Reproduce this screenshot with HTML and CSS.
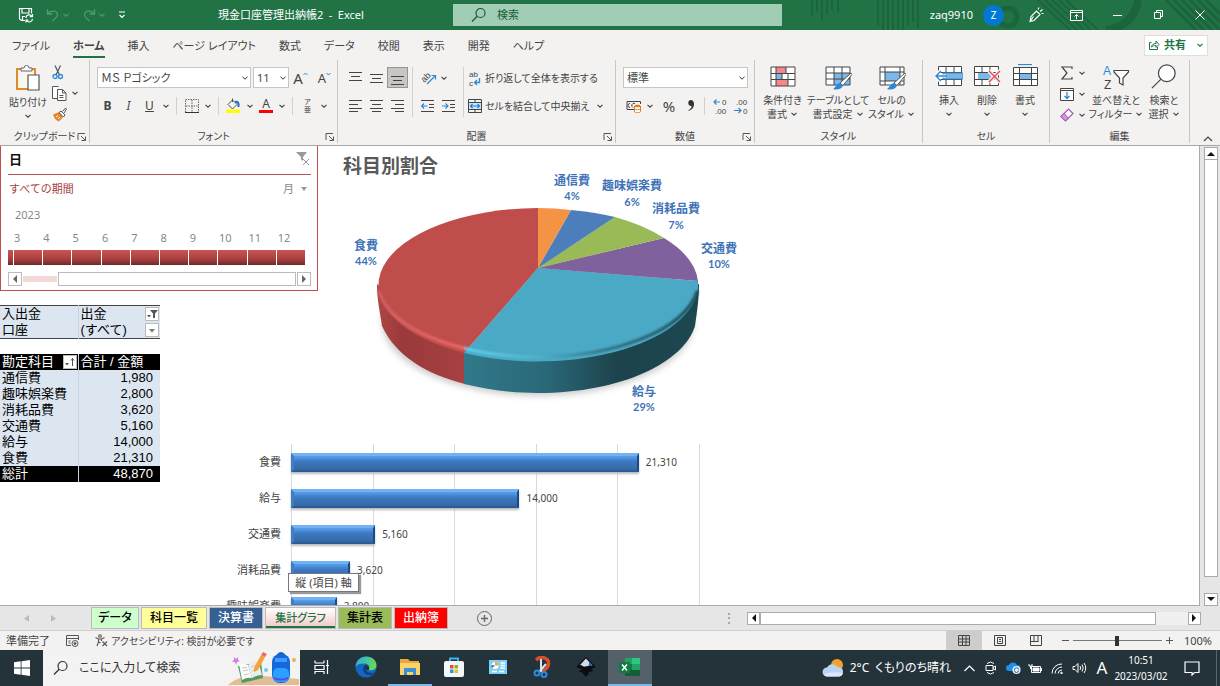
FILE: index.html
```html
<!DOCTYPE html>
<html lang="ja">
<head>
  <meta charset="UTF-8">
  <meta name="viewport" content="width=device-width, initial-scale=1.0">
  <title>現金口座管理出納帳2 - Excel</title>
  <link rel="stylesheet" href="styles.css">
</head>
<body>

<svg class="defs" aria-hidden="true">
  <symbol id="chev" viewBox="0 0 8 8"><path d="M1.5 2.8 4 5.2 6.5 2.8" fill="none" stroke="currentColor" stroke-width="1.1"/></symbol>
  <symbol id="launcher" viewBox="0 0 10 10"><path d="M1 8V1.5h7M4 4l4 4M8.500 4.500V8.500H4.500" fill="none" stroke="#555"/></symbol>
  <symbol id="glass" viewBox="0 0 16 16"><circle cx="9.500" cy="6" r="4.500" fill="none" stroke="currentColor" stroke-width="1.2"/><path d="M6.200 9.200 1 14.500" stroke="currentColor" stroke-width="1.300"/></symbol>
</svg>

<header class="titlebar">
  <svg class="titlebar-art" width="420" height="30" viewBox="0 0 420 30" fill="none" stroke="#1c653c">
    <path d="M12 0v16M17 0v12M22 0v20M27 0v14M32 0v10M38 0v12M78 0v26M83 0v30M88 0v30M93 0v30M98 0v30M103 0v30M108 0v26M113 0v22M118 0v28" stroke-width="2"/>
    <circle cx="208" cy="17" r="9" stroke-width="5"/>
    <path d="M238 0l32 30M245 0l32 30M252 0l32 30M259 0l32 30M266 0l32 30" stroke-width="2"/>
    <path d="M338 0q-4 26-32 30" stroke-width="8"/>
    <path d="M366 0l30 30M374 0l30 30M382 0l30 30M390 0l30 30M398 0l22 22M406 0l14 14" stroke-width="3"/>
  </svg>
  <div class="quick">
    <button aria-label="上書き保存"><svg width="16" height="16" viewBox="0 0 16 16" fill="none" stroke="#fff" stroke-width="1.200"><path d="M7 13.500H3.500L1.500 12V1.500h12v5M4 1.500v4.500h7V1.500M4.500 13.500V9.500H7"/><path d="M8 11a3.200 3.200 0 0 1 6-1.500M14.500 7v2.700h-2.700M14.500 12a3.200 3.200 0 0 1-6 1.300M8 15.500v-2.500h2.500"/></svg></button>
    <button class="dim" aria-label="元に戻す"><svg width="14" height="14" viewBox="0 0 14 14" fill="none" stroke="currentColor" stroke-width="1.300"><path d="M1.500 1v5h5M1.700 6C4 2 12 2 11.500 7c-.3 2.500-3 4-5 6"/></svg><svg class="chev"><use href="#chev"/></svg></button>
    <button class="dim" aria-label="やり直し"><svg width="14" height="14" viewBox="0 0 14 14" fill="none" stroke="currentColor" stroke-width="1.300"><path d="M12.500 1v5h-5M12.300 6C10 2 2 2 2.500 7c.3 2.500 3 4 5 6"/></svg><svg class="chev"><use href="#chev"/></svg></button>
    <button aria-label="カスタマイズ"><svg width="8" height="8" viewBox="0 0 8 8" fill="none" stroke="#fff" stroke-width="1.200"><path d="M1 1h6M1.500 4 4 6.500 6.500 4"/></svg></button>
  </div>
  <h1 class="doc-title">現金口座管理出納帳2&ensp;-&ensp;Excel</h1>
  <label class="find"><svg width="16" height="16"><use href="#glass"/></svg><input type="text" placeholder="検索" aria-label="検索"></label>
  <div class="account">
    <span>zaq9910</span><span class="avatar">Z</span>
  </div>
  <div class="window-buttons">
    <button aria-label="描画"><svg width="16" height="16" viewBox="0 0 16 16" fill="none" stroke="#fff" stroke-width="1.100"><path d="M2 14.500 3 9.500 8.500 4l3.500 3.500-6 6zM2 14.500l3.500-5M10 2.500 11 .5M12 4.500l2.500-2M13.500 6.500h2"/></svg></button>
    <button aria-label="リボンの表示オプション"><svg width="13" height="11" viewBox="0 0 13 11" fill="none" stroke="#fff"><path d="M.5.5h12v10H.5zM.5 2.500h12M6.500 9V4.500M4.500 6.500l2-2 2 2"/></svg></button>
    <button aria-label="最小化"><svg width="10" height="10" viewBox="0 0 10 10" stroke="#fff"><path d="M0 5.500h9"/></svg></button>
    <button aria-label="元のサイズ"><svg width="10" height="10" viewBox="0 0 10 10" fill="none" stroke="#fff"><path d="M.5 2.500h6v6h-6zM2.500 2.500V.5h6v6H6.500"/></svg></button>
    <button aria-label="閉じる"><svg width="10" height="10" viewBox="0 0 10 10" stroke="#fff"><path d="M.5.5l9 9M9.500.5l-9 9"/></svg></button>
  </div>
</header>

<nav class="menu">
  <a href="#">ファイル</a>
  <a href="#" class="active">ホーム</a>
  <a href="#">挿入</a>
  <a href="#">ページ レイアウト</a>
  <a href="#">数式</a>
  <a href="#">データ</a>
  <a href="#">校閲</a>
  <a href="#">表示</a>
  <a href="#">開発</a>
  <a href="#">ヘルプ</a>
  <button class="share"><svg width="12" height="12" viewBox="0 0 12 12" fill="none" stroke="currentColor"><path d="M3.500 3.500h-2v7h8V8M3.500 8C4 5.500 5.500 4.500 8 4.500V2l3 3.500L8 8.500V6.500C6 6.500 4.500 7 3.500 8z"/></svg>共有<svg class="chev"><use href="#chev"/></svg></button>
</nav>

<section class="ribbon">
  <div class="group">
    <div class="group-body clipboard">
      <button class="big"><svg width="26" height="28" viewBox="0 0 26 28" fill="none"><path d="M2 5h18v20H2z" stroke="#e08a2c" stroke-width="2" fill="#faf6f0"/><path d="M6 7V4h3a2.500 2.500 0 0 1 5 0h3v3z" fill="#fff" stroke="#666"/><path d="M13 11h11v15H13z" fill="#fff" stroke="#555" stroke-width="1.200"/></svg><span>貼り付け</span><svg class="chev"><use href="#chev"/></svg></button>
      <div class="stack">
        <button aria-label="切り取り"><svg width="12" height="15" viewBox="0 0 12 15" fill="none"><path d="M3 .5 7.500 10M8.500.5 4 10" stroke="#555" stroke-width="1.200"/><circle cx="3" cy="11.500" r="2" stroke="#2b88d8" stroke-width="1.300"/><circle cx="8.500" cy="11.500" r="2" stroke="#2b88d8" stroke-width="1.300"/></svg></button>
        <button aria-label="コピー"><svg width="15" height="15" viewBox="0 0 15 15" fill="#fff" stroke="#555"><path d="M5.500 12.500h-5V.5h6"/><path d="M5.500 3.500h5l3.500 3.500v7.500H5.500zM10.500 3.500V7H14M7.500 9.500h4M7.500 11.500h4"/></svg><svg class="chev"><use href="#chev"/></svg></button>
        <button aria-label="書式のコピー"><svg width="15" height="15" viewBox="0 0 15 15"><path d="M1 7.500 7.500 5l3.500 5-4 4.500c-3-1-5-3.500-6-7z" fill="#e8842a"/><path d="M7 5.500 9 4l4 4-1.500 2zM10.500 4.500 13.500 1l1 1L12 6" fill="#fff" stroke="#555"/><path d="M4 10l2-1.500M6 12l2-2" stroke="#fff"/></svg></button>
      </div>
    </div>
    <div class="group-name">クリップボード<svg class="launcher"><use href="#launcher"/></svg></div>
  </div>

  <div class="group">
    <div class="group-body rows">
      <div class="row">
        <select class="font-name" aria-label="フォント"><option>ＭＳ Ｐゴシック</option></select>
        <select class="font-size" aria-label="フォント サイズ"><option>11</option></select>
        <button class="letter" aria-label="拡大">A<svg width="6" height="12" viewBox="0 0 6 12" fill="none" stroke="#2b88d8"><path d="M.5 4 2.500 2l2 2"/></svg></button>
        <button class="letter small" aria-label="縮小">A<svg width="6" height="12" viewBox="0 0 6 12" fill="none" stroke="#2b88d8"><path d="M.5 2l2 2 2-2"/></svg></button>
      </div>
      <div class="row">
        <button class="tool"><b>B</b></button>
        <button class="tool"><i>I</i></button>
        <button class="tool"><u>U</u></button>
        <button class="drop" aria-label="下線"><svg class="chev"><use href="#chev"/></svg></button>
        <span class="sep"></span>
        <button class="tool" aria-label="罫線"><svg width="14" height="14" viewBox="0 0 14 14" fill="none" stroke="#666"><path d="M.5 13V.5h13V13M7 1v12M1 7h12" stroke-dasharray="1.500 1"/><path d="M0 13.500h14" stroke="#333"/></svg></button>
        <button class="drop" aria-label="罫線の種類"><svg class="chev"><use href="#chev"/></svg></button>
        <span class="sep"></span>
        <button class="tool" aria-label="塗りつぶし"><svg width="15" height="15" viewBox="0 0 15 15" fill="none"><path d="M2 6.500 6.500 2l4.500 4.500L6.500 11zM6.500 4V.5" stroke="#555"/><path d="M9 4c3-1 4 1 3.500 5" stroke="#1f6fc0" stroke-width="2"/><path d="M0 11.500h14v3.500H0z" fill="#ff0"/></svg></button>
        <button class="drop" aria-label="塗りつぶしの色"><svg class="chev"><use href="#chev"/></svg></button>
        <button class="tool font-color" aria-label="フォントの色">A</button>
        <button class="drop" aria-label="その他の色"><svg class="chev"><use href="#chev"/></svg></button>
        <span class="sep"></span>
        <button class="tool ruby">ア<br>亜</button>
        <button class="drop" aria-label="ふりがな"><svg class="chev"><use href="#chev"/></svg></button>
      </div>
    </div>
    <div class="group-name">フォント<svg class="launcher"><use href="#launcher"/></svg></div>
  </div>

  <div class="group">
    <div class="group-body align">
      <div class="align-grid">
        <button class="tool" aria-label="上揃え"><svg width="13" height="14"><path d="M0 1.500h13M2 5.500h9M0 9.500h13" stroke="#444"/></svg></button>
        <button class="tool" aria-label="上下中央揃え"><svg width="13" height="14"><path d="M0 3.500h13M2 7.500h9M0 11.500h13" stroke="#444"/></svg></button>
        <button class="tool pressed" aria-label="下揃え"><svg width="13" height="14"><path d="M0 5.500h13M2 9.500h9M0 13.500h13" stroke="#444"/></svg></button>
        <button class="tool" aria-label="左揃え"><svg width="13" height="12"><path d="M0 .5h13M0 4.500h9M0 8.500h13M0 11.500h9" stroke="#444"/></svg></button>
        <button class="tool" aria-label="中央揃え"><svg width="13" height="12"><path d="M0 .5h13M2 4.500h9M0 8.500h13M2 11.500h9" stroke="#444"/></svg></button>
        <button class="tool" aria-label="右揃え"><svg width="13" height="12"><path d="M0 .5h13M4 4.500h9M0 8.500h13M4 11.500h9" stroke="#444"/></svg></button>
      </div>
      <span class="sep tall"></span>
      <div class="rows indent">
        <div class="row">
          <button class="tool" aria-label="方向"><svg class="lettered" width="16" height="16" viewBox="0 0 16 16"><text x="1" y="11" font-size="9" transform="rotate(-45 5 8)">ab</text><path d="M7 14 15 6M11.500 5.500H15.500V9.500" fill="none" stroke="#2b88d8" stroke-width="1.200"/></svg></button>
          <button class="drop" aria-label="方向の種類"><svg class="chev"><use href="#chev"/></svg></button>
        </div>
        <div class="row">
          <button class="tool" aria-label="インデントを減らす"><svg width="13" height="12" fill="none"><path d="M0 .5h13M8 4.500h5M8 7.500h5M0 11.500h13" stroke="#444"/><path d="M6.500 6H.500M3 3.500.500 6 3 8.500" stroke="#2b88d8" stroke-width="1.200"/></svg></button>
          <button class="tool" aria-label="インデントを増やす"><svg width="13" height="12" fill="none"><path d="M0 .5h13M8 4.500h5M8 7.500h5M0 11.500h13" stroke="#444"/><path d="M0 6h6M3.500 3.500 6 6 3.500 8.500" stroke="#2b88d8" stroke-width="1.200"/></svg></button>
        </div>
      </div>
      <span class="sep tall"></span>
      <div class="rows wrap">
        <div class="row">
          <button class="wide"><svg class="lettered" width="14" height="18" viewBox="0 0 14 18"><text x="1" y="8" font-size="8">ab</text><text x="1" y="17" font-size="8">c</text><path d="M11.500 9v4.500H7M9 11l-2.500 2.500L9 16" fill="none" stroke="#2b88d8" stroke-width="1.300"/></svg>折り返して全体を表示する</button>
        </div>
        <div class="row">
          <button class="wide"><svg width="14" height="14" viewBox="0 0 14 14" fill="none"><path d="M.5.5h13v13H.5zM.5 3.500h13M.5 10.500h13M7 .5v3M7 10.500v3" stroke="#444"/><path d="M1 4h12v6H1z" fill="#cfe6f8"/><path d="M2.500 7h9M4.500 5 2.500 7l2 2M9.500 5l2 2-2 2" stroke="#1f7fd0" stroke-width="1.200"/></svg>セルを結合して中央揃え</button>
          <button class="drop" aria-label="結合の種類"><svg class="chev"><use href="#chev"/></svg></button>
        </div>
      </div>
    </div>
    <div class="group-name">配置<svg class="launcher"><use href="#launcher"/></svg></div>
  </div>

  <div class="group">
    <div class="group-body rows">
      <div class="row">
        <select class="number-format" aria-label="表示形式"><option>標準</option></select>
      </div>
      <div class="row">
        <button class="tool" aria-label="通貨"><svg width="16" height="14" viewBox="0 0 16 14" fill="none"><path d="M9 10.500H1v-8h13.500V5M4 4.500a2 2 0 0 0 0 4M9 4.500a2 2 0 0 0-2 4" stroke="#444"/><path d="M8.500 7v5.500c0 1.500 6 1.500 6 0V7" fill="#fff" stroke="#e07a1c"/><ellipse cx="11.500" cy="7" rx="3" ry="1.200" fill="#e07a1c"/><path d="M8.500 9.500c0 1.500 6 1.500 6 0" stroke="#e07a1c"/></svg></button>
        <button class="drop" aria-label="通貨の種類"><svg class="chev"><use href="#chev"/></svg></button>
        <button class="tool percent">%</button>
        <button class="tool comma" aria-label="桁区切り"><svg width="8" height="11" viewBox="0 0 8 11"><path d="M4 0a3 3 0 1 0 .6 6C4.500 8 3 9.500 1.500 10v.8C5 10 7.300 7 7 3.500 6.800 1.200 5.500 0 4 0z" fill="#333"/></svg></button>
        <span class="sep"></span>
        <button class="tool" aria-label="小数点以下を増やす"><svg class="lettered" width="16" height="18" viewBox="0 0 16 18"><path d="M8 5H2M4.500 2.500 2 5 4.500 7.500" fill="none" stroke="#2b88d8" stroke-width="1.200"/><text x="10" y="8" font-size="8">0</text><text x="3" y="17" font-size="8">.00</text></svg></button>
        <button class="tool" aria-label="小数点以下を減らす"><svg class="lettered" width="16" height="18" viewBox="0 0 16 18"><path d="M1 13.500h7M5.500 11 8 13.500 5.500 16" fill="none" stroke="#2b88d8" stroke-width="1.200"/><text x="3" y="8" font-size="8">.00</text><text x="10" y="17" font-size="8">0</text></svg></button>
      </div>
    </div>
    <div class="group-name">数値<svg class="launcher"><use href="#launcher"/></svg></div>
  </div>

  <div class="group">
    <div class="group-body styles">
      <button class="big"><svg width="28" height="26" viewBox="0 0 28 26"><path d="M2 3h24v19H2z" fill="#fff"/><path d="M7 3h10v6H7zM7 16h12v6H7z" fill="#f4868c"/><path d="M7 10h6v5H7z" fill="#7cb7ea"/><path d="M2 3h24v19H2zM2 9.500h24M2 15.500h24M7 3v19M13 9v7M17 3v6M19 9v13" fill="none" stroke="#444"/></svg><span>条件付き<br>書式<svg class="chev"><use href="#chev"/></svg></span></button>
      <button class="big"><svg width="28" height="26" viewBox="0 0 28 26"><path d="M2 3h24v18H2z" fill="#fff"/><path d="M10 9h16v12H10z" fill="#7cb7ea"/><path d="M2 3h24v18H2zM2 9h24M2 15h24M10 3v18M18 3v18" fill="none" stroke="#444"/><path d="M27 9 16 19l3 2.500L28 10.500z" fill="#fff" stroke="#555"/><path d="M16 19c-3 0-3 3-7 6 4 1.500 9 0 10-3.500z" fill="#2b88d8"/></svg><span>テーブルとして<br>書式設定<svg class="chev"><use href="#chev"/></svg></span></button>
      <button class="big"><svg width="28" height="26" viewBox="0 0 28 26"><path d="M2 3h24v18H2z" fill="#fff"/><path d="M7 8h15v9H7z" fill="#7cb7ea"/><path d="M2 3h24v18H2zM2 8h24M2 17h24M7 3v18M22 3v18" fill="none" stroke="#444"/><path d="M27 9 16 19l3 2.500L28 10.500z" fill="#fff" stroke="#555"/><path d="M16 19c-3 0-3 3-7 6 4 1.500 9 0 10-3.500z" fill="#2b88d8"/></svg><span>セルの<br>スタイル<svg class="chev"><use href="#chev"/></svg></span></button>
    </div>
    <div class="group-name">スタイル</div>
  </div>

  <div class="group">
    <div class="group-body cells">
      <button class="big"><svg width="28" height="26" viewBox="0 0 28 26"><path d="M3.500 2.500h23v19h-23z" fill="#fff" stroke="#444"/><path d="M3 8.500h24M3 15.500h24M11 2.500v19M19 2.500v19" stroke="#444"/><path d="M8 9h20v6H8z" fill="#7cb7ea" stroke="#3a8ad0"/><path d="M11 12H0M5 7l-5 5 5 5" fill="none" stroke="#fff" stroke-width="3"/><path d="M12 12H1M6 7l-5 5 5 5" fill="none" stroke="#2b88d8" stroke-width="1.400"/></svg><span>挿入</span><svg class="chev"><use href="#chev"/></svg></button>
      <button class="big"><svg width="28" height="26" viewBox="0 0 28 26"><path d="M1.500 2.500h24v19h-24z" fill="#fff" stroke="#444"/><path d="M1 8.500h25M1 15.500h25M9 2.500v19M17 2.500v19" stroke="#444"/><path d="M5 9h12v6H5z" fill="#7cb7ea"/><path d="M16 7l11 11M27 7 16 18" stroke="#f2f1f0" stroke-width="4"/><path d="M16 7l11 11M27 7 16 18" stroke="#e8484c" stroke-width="1.400"/></svg><span>削除</span><svg class="chev"><use href="#chev"/></svg></button>
      <button class="big"><svg width="28" height="26" viewBox="0 0 28 26"><path d="M2.500 3.500h24v18h-24z" fill="#fff" stroke="#444"/><path d="M9 9h12v7H9z" fill="#7cb7ea"/><path d="M2 9.500h25M2 15.500h25M8.500 3v18M20.500 3v18" stroke="#444"/><path d="M7 .500h14" stroke="#2b88d8" stroke-width="1.200"/></svg><span>書式</span><svg class="chev"><use href="#chev"/></svg></button>
    </div>
    <div class="group-name">セル</div>
  </div>

  <div class="group">
    <div class="group-body editing">
      <div class="stack">
        <button aria-label="合計"><svg width="14" height="14" viewBox="0 0 14 14"><path d="M12 3V1H2l5 6-5 6h10v-2" fill="none" stroke="#444" stroke-width="1.200"/></svg><svg class="chev"><use href="#chev"/></svg></button>
        <button aria-label="フィル"><svg width="14" height="13" viewBox="0 0 14 13"><path d="M.5.5h13v12H.5zM.5 2.500h13" fill="#fff" stroke="#444"/><path d="M7 4v6.500M4.500 8 7 10.500 9.500 8" fill="none" stroke="#2b88d8" stroke-width="1.300"/></svg><svg class="chev"><use href="#chev"/></svg></button>
        <button aria-label="クリア"><svg width="14" height="14" viewBox="0 0 14 14"><path d="M1 8.500 8.500 1 13 5.500 5.500 13z" fill="#fff" stroke="#a855b8" stroke-width="1.200"/><path d="M1 8.500 4 5.500 8.500 10 5.500 13z" fill="#cf9ad8" stroke="#a855b8"/></svg><svg class="chev"><use href="#chev"/></svg></button>
      </div>
      <button class="big"><svg class="lettered" width="28" height="26" viewBox="0 0 28 26"><text class="sort-a" x="1" y="11" font-size="12">A</text><text x="2" y="25" font-size="12">Z</text><path d="M12 6.500h14.500v1.500L21 14v7l-3.500-2v-5L12 8z" fill="#fff" stroke="#444" stroke-width="1.200"/></svg><span>並べ替えと<br>フィルター<svg class="chev"><use href="#chev"/></svg></span></button>
      <button class="big"><svg width="28" height="26" viewBox="0 0 28 28"><circle cx="17" cy="10" r="9" fill="#fff" stroke="#444" stroke-width="1.300"/><path d="M10.500 16.500 1 26" stroke="#444" stroke-width="1.300"/></svg><span>検索と<br>選択<svg class="chev"><use href="#chev"/></svg></span></button>
    </div>
    <div class="group-name">編集</div>
  </div>
  <button class="collapse" aria-label="リボンを折りたたむ"><svg width="10" height="7"><path d="M1 6l4-4 4 4" fill="none" stroke="#444" stroke-width="1.200"/></svg></button>
</section>

<main class="workspace">
  <div class="sheet">
    <table class="pivot filters">
      <tr><th scope="row">入出金</th><td>出金<button aria-label="入出金のフィルター"><svg width="12" height="12"><path d="M4 2h8L9 5.500V10H7V5.500z" fill="#555"/><path d="M1 7h4L3 9.500z" fill="#555"/></svg></button></td></tr>
      <tr><th scope="row">口座</th><td>(すべて)<button aria-label="口座のフィルター"><svg width="12" height="12"><path d="M3 5h6L6 8.500z" fill="#777"/></svg></button></td></tr>
    </table>
    <table class="pivot totals">
      <thead>
        <tr><th>勘定科目<button aria-label="並べ替え"><svg width="12" height="12"><path d="M1 7h4L3 9.500z" fill="#555"/><path d="M8.500 10V2.500M7 4.500 8.500 2.500 10 4.500" fill="none" stroke="#555"/></svg></button></th><th>合計 / 金額</th></tr>
      </thead>
      <tbody>
        <tr><th scope="row">通信費</th><td>1,980</td></tr>
        <tr><th scope="row">趣味娯楽費</th><td>2,800</td></tr>
        <tr><th scope="row">消耗品費</th><td>3,620</td></tr>
        <tr><th scope="row">交通費</th><td>5,160</td></tr>
        <tr><th scope="row">給与</th><td>14,000</td></tr>
        <tr><th scope="row">食費</th><td>21,310</td></tr>
      </tbody>
      <tfoot>
        <tr><th scope="row">総計</th><td>48,870</td></tr>
      </tfoot>
    </table>

    <!-- floating objects on the sheet -->
    <div class="timeline">
      <div class="timeline-head">日<button aria-label="フィルターのクリア"><svg width="14" height="14" viewBox="0 0 14 14"><path d="M0 0h11L7 5v4L5 7.500V5z" fill="#999"/><path d="M6 6l7 7M13 7l-6 6" stroke="#999" fill="none"/></svg></button></div>
      <div class="timeline-range"><span>すべての期間</span><button>月<svg width="6" height="4"><path d="M0 0h6L3 4z" fill="#999"/></svg></button></div>
      <div class="timeline-year">2023</div>
      <div class="months"><span>3</span><span>4</span><span>5</span><span>6</span><span>7</span><span>8</span><span>9</span><span>10</span><span>11</span><span>12</span></div>
      <div class="period"><i></i><i></i><i></i><i></i><i></i><i></i><i></i><i></i><i></i><i></i><i></i></div>
      <div class="timeline-scroll">
        <button aria-label="前へ"><svg width="6" height="8"><path d="M5 0v8L1 4z" fill="#666"/></svg></button>
        <span class="track"></span><span class="thumb"></span>
        <button aria-label="次へ"><svg width="6" height="8"><path d="M1 0v8l4-4z" fill="#666"/></svg></button>
      </div>
    </div>

    <svg class="pie" width="420" height="280" viewBox="330 146 420 280">
      <defs>
        <linearGradient id="redSide"><stop offset="0" stop-color="#b04545"/><stop offset=".3" stop-color="#9a3a3b"/><stop offset="1" stop-color="#a74041"/></linearGradient>
        <linearGradient id="tealSide"><stop offset="0" stop-color="#31798a"/><stop offset=".35" stop-color="#2a6878"/><stop offset=".65" stop-color="#1d434c"/><stop offset="1" stop-color="#1d4751"/></linearGradient>
        <linearGradient id="rim" gradientUnits="userSpaceOnUse" x1="378" y1="0" x2="698" y2="0"><stop offset="0" stop-color="#d06060"/><stop offset=".270" stop-color="#f06a6a"/><stop offset=".272" stop-color="#62d4f0"/><stop offset=".5" stop-color="#4fb2cb"/><stop offset=".7" stop-color="#317485"/><stop offset="1" stop-color="#1d4751"/></linearGradient>
        <filter id="soft" x="-10%" y="-20%" width="120%" height="140%"><feGaussianBlur stdDeviation="1"/></filter>
        <filter id="shade" x="-10%" y="-20%" width="120%" height="140%"><feGaussianBlur stdDeviation="3"/></filter>
      </defs>
      <ellipse cx="538" cy="322" rx="156" ry="74" fill="#ccc" filter="url(#shade)"/>
      <path d="M377 284C377 300 380 312 382 326C396 356 426 374 465 384V350z" fill="url(#redSide)"/>
      <path d="M464 350V384C490 390 512 393 538 393C622 393 684 362 695 326C697 312 699 300 699 284z" fill="url(#tealSide)"/>
      <path d="M538 268V208A161 77 0 0 0 464 353z" fill="#bf4d4b"/>
      <path d="M538 268 464 353A161 77 0 0 0 698 281z" fill="#4aa9c5"/>
      <path d="M538 268 698 281A161 77 0 0 0 664 238z" fill="#7f619e"/>
      <path d="M538 268 664 238A161 77 0 0 0 615 217z" fill="#9ab957"/>
      <path d="M538 268 615 217A161 77 0 0 0 571 210z" fill="#4b7ebb"/>
      <path d="M538 268 571 210A161 77 0 0 0 538 208z" fill="#f59344"/>
      <path d="M379 292A161 77 0 0 0 697 292" fill="none" stroke="url(#rim)" stroke-width="3" stroke-linecap="round" filter="url(#soft)"/>
      <g class="pie-text">
        <text class="pie-title" x="343" y="173">科目別割合</text>
        <text x="572" y="185">通信費</text><text class="pct" x="572" y="200">4%</text>
        <text x="632" y="190">趣味娯楽費</text><text class="pct" x="632" y="206">6%</text>
        <text x="676" y="213">消耗品費</text><text class="pct" x="676" y="229">7%</text>
        <text x="719" y="253">交通費</text><text class="pct" x="719" y="268">10%</text>
        <text x="366" y="250">食費</text><text class="pct" x="366" y="265">44%</text>
        <text x="644" y="396">給与</text><text class="pct" x="644" y="411">29%</text>
      </g>
    </svg>

    <div class="bar-chart">
      <div class="bar-names"><span>食費</span><span>給与</span><span>交通費</span><span>消耗品費</span><span>趣味娯楽費</span></div>
      <div class="bar-plot">
        <div class="bar-row"><i class="bar" style="width:85.24%"></i>21,310</div>
        <div class="bar-row"><i class="bar" style="width:56%"></i>14,000</div>
        <div class="bar-row"><i class="bar" style="width:20.64%"></i>5,160</div>
        <div class="bar-row"><i class="bar" style="width:14.48%"></i>3,620</div>
        <div class="bar-row"><i class="bar" style="width:11.2%"></i>2,800</div>
      </div>
      <div class="tooltip" role="tooltip">縦 (項目) 軸</div>
    </div>
  </div>
  <div class="vscroll">
    <button aria-label="上へ"><svg width="8" height="5"><path d="M0 5h8L4 1z" fill="#111"/></svg></button>
    <span class="thumb"></span>
    <button aria-label="下へ"><svg width="8" height="5"><path d="M0 0h8L4 4z" fill="#111"/></svg></button>
  </div>
</main>

<nav class="sheet-tabs">
  <div class="tab-arrows"><svg width="5" height="7"><path d="M5 0v7L0 3.500z" fill="#bbb"/></svg><svg width="5" height="7"><path d="M0 0v7l5-3.500z" fill="#bbb"/></svg></div>
  <a href="#" class="tab green">データ</a>
  <a href="#" class="tab yellow">科目一覧</a>
  <a href="#" class="tab blue">決算書</a>
  <a href="#" class="tab current">集計グラフ</a>
  <a href="#" class="tab olive">集計表</a>
  <a href="#" class="tab red">出納簿</a>
  <button class="add" aria-label="新しいシート"><svg width="15" height="15" fill="none" stroke="#666"><circle cx="7.500" cy="7.500" r="7"/><path d="M7.500 4v7M4 7.500h7" stroke-width="1.400"/></svg></button>
  <span class="dots">⋮</span>
  <div class="hscroll">
    <button aria-label="左へ"><svg width="5" height="8"><path d="M5 0v8L1 4z" fill="#111"/></svg></button>
    <span class="thumb"></span>
    <button aria-label="右へ"><svg width="5" height="8"><path d="M0 0v8l4-4z" fill="#111"/></svg></button>
  </div>
</nav>

<footer class="status">
  <span>準備完了</span>
  <svg width="13" height="12" viewBox="0 0 13 12" fill="none" stroke="#555"><path d="M5 10.500H.5V.5h12V5M.5 3.500h12M2.500 6h2M2.500 8h2"/><circle cx="9" cy="8.500" r="3"/><circle cx="9" cy="8.500" r="1" fill="#555"/></svg>
  <span class="access"><svg width="13" height="13" viewBox="0 0 13 13" fill="none" stroke="#555" stroke-width="1.100"><circle cx="5" cy="2" r="1.300"/><path d="M.5 3.500 3.500 5v3L2 12M9.500 3.500 6.500 5v2M3.500 5h3M4 8l1.500 1M7.500 7.500l4.500 4.500M12 7.500 7.500 12"/></svg>アクセシビリティ: 検討が必要です</span>
  <div class="views">
    <button class="on" aria-label="標準"><svg width="12" height="11" fill="none" stroke="#444"><path d="M.5.5h11v10H.5zM.5 4h11M.5 7h11M4.500.5v10M8 .5v10"/></svg></button>
    <button aria-label="ページ レイアウト"><svg width="12" height="11" fill="none" stroke="#444"><path d="M.5.5h11v10H.5zM3.500 2.500h5v6h-5zM5 4.500h2M5 6.500h2"/></svg></button>
    <button aria-label="改ページ プレビュー"><svg width="12" height="11" fill="none" stroke="#444"><path d="M.5.5h11v10H.5zM4 .5v6M8 .5v6M.5 6.500h8"/></svg></button>
  </div>
  <button class="step" aria-label="縮小"><svg width="7" height="7"><path d="M0 3.500h7" stroke="#555"/></svg></button>
  <input type="range" class="zoom" min="0" max="200" value="100" aria-label="ズーム">
  <button class="step" aria-label="拡大"><svg width="7" height="7"><path d="M0 3.500h7M3.500 0v7" stroke="#555"/></svg></button>
  <span class="zoom-value">100%</span>
</footer>

<footer class="taskbar">
  <button class="start" aria-label="スタート"><svg width="16" height="16" fill="#fff"><path d="M0 2.300 6.700 1.300v6.300H0zM7.500 1.200 16 0v7.600H7.500zM0 8.400h6.700v6.300L0 13.700zM7.500 8.400H16V16l-8.500-1.200z"/></svg></button>
  <label class="task-search">
    <svg width="16" height="16"><use href="#glass"/></svg>
    <input type="text" placeholder="ここに入力して検索" aria-label="ここに入力して検索">
    <svg width="72" height="34" viewBox="0 0 72 34">
      <path d="M0 34C12 24 22 25 34 25L71 28V34z" fill="#e2bd94"/>
      <path d="M6 6l2 2 2-2 0 3 2 1-3 1-1 3-1-3-3 0 2-2z" fill="#d67bea"/>
      <path d="M10 15 14 32 35 27 33 11z" fill="#4f9a68"/><path d="M11 13q5-1 9 1l4 13q-5-1-10 2z" fill="#fafafa"/><path d="M20 14q4-4 10-5l4 15q-6 0-10 3z" fill="#ececec"/><path d="M14 17l5-.5M15 20l5-1M23 16l6-2M24 20l6-2M16 24l5-1" stroke="#c9c9c9"/>
      <path d="M33 4l4 2-7 13-4 2 0-4z" fill="#f3a33b"/><path d="M33 4l2-3 4 2-2 3z" fill="#ec6d5e"/>
      <circle cx="38" cy="19" r="2" fill="#6ccdf0"/><circle cx="66" cy="9" r="2" fill="#f4b23c"/>
      <path d="M49 5q4-6 8 0" fill="none" stroke="#1460c0" stroke-width="2"/><rect x="44" y="3" width="18" height="29" rx="8" fill="#1667dc"/><path d="M47 7h12v4H47z" fill="#3f9bff"/><rect x="45" y="17" width="16" height="14" rx="5" fill="#2ba0ff"/><path d="M46 26q7 3 14 0v2q-7 3-14 0z" fill="#5a48e0"/>
    </svg>
  </label>
  <button class="app" aria-label="タスク ビュー"><svg width="16" height="14" fill="none" stroke="#fff" stroke-width="1.200"><path d="M1 3V.5M10 3V.5M1 3h9M1 5.500h9v4H1zM1 14v-2.500h9V14M13.500 0v14M12 5.500h3"/></svg></button>
  <button class="app" aria-label="Edge"><svg width="22" height="22" viewBox="0 0 22 22"><defs><linearGradient id="edge" x2="1" y2=".4"><stop offset="0" stop-color="#2aa9ea"/><stop offset="1" stop-color="#63d957"/></linearGradient></defs><circle cx="11" cy="11" r="10.500" fill="#1467c0"/><path d="M.5 11C1 4 6 .5 11 .5c7 0 11 5 10.500 9.500-.5 4-5 5-8 4 1.500-2 1-6-3-6.500C6 7 2 8 .5 11z" fill="url(#edge)"/><path d="M8 13c0 4 4 6.500 8 6 2-.5 3-1.500 3.500-2.500-4 1.500-8 0-8.500-2.500 0-2 0-3.500.500-5C9 9 8 11 8 13z" fill="#0d3f8a"/><path d="M11 9.500c-1.500 1-1 4 1.500 4.500h1c1.500-2 0-5-2.500-4.500z" fill="#263238"/></svg></button>
  <button class="app open" aria-label="エクスプローラー"><svg width="20" height="18"><path d="M0 1h8l2 2h9v14H0z" fill="#e9a93a"/><path d="M0 5h20v12H0z" fill="#fbd268"/><path d="M4 10h12v7h-3v-3H7v3H4z" fill="#3f8fd6"/></svg></button>
  <button class="app" aria-label="Store"><svg width="20" height="20"><path d="M6 5V1.500h8V5" fill="none" stroke="#38b2ee" stroke-width="2"/><rect y="4" width="20" height="16" rx="2" fill="#f5f8fb"/><path d="M6 8h3.500v3.500H6z" fill="#ef4c2c"/><path d="M10.500 8H14v3.500h-3.500z" fill="#7db82c"/><path d="M6 12.500h3.500V16H6z" fill="#1f9be0"/><path d="M10.500 12.500H14V16h-3.500z" fill="#f8b81e"/></svg></button>
  <button class="app" aria-label="コントロール パネル"><svg width="18" height="14"><path d="M0 0h18v14H0z" fill="#7fd0f6"/><circle cx="6" cy="5.500" r="3.500" fill="#fff"/><path d="M6 5.500V2a3.500 3.500 0 0 1 3.500 3.500z" fill="#f5a623"/><path d="M6 5.500 3 8a3.500 3.500 0 0 1-.5-3z" fill="#1f6fc0"/><path d="M11.500 3H16M11.500 5.500H16M11.500 8H16M3 11.500h5M10 11.500h5" stroke="#fff" stroke-width="1.300"/></svg></button>
  <button class="app" aria-label="切り取りツール"><svg width="18" height="22" fill="none"><path d="M3 4C8-1 16 2 15.500 8c-.5 5-4 6-7 7" stroke="#d94f2a" stroke-width="3.500"/><path d="M8 3v13M13 8l-7 8" stroke="#dfe4e8" stroke-width="2"/><circle cx="4" cy="17" r="2.500" stroke="#2a8be0" stroke-width="2"/><circle cx="11" cy="18.500" r="2.500" stroke="#2a8be0" stroke-width="2"/></svg></button>
  <button class="app" aria-label="Inkscape"><svg width="20" height="20"><path d="M10 0 19 9c1 2-3 2-4 3l2 2-4 1-1 3-2 1.500L8 18l-1-2-4-1.500L6 12C3 11 0 11 1 9z" fill="#0b0d10"/><path d="M10 1.500 16 8c-2 1-3-.5-4 1-1 1-2-.5-3 .5S6 8 4 8z" fill="#cfdbe8"/><path d="M13 4.500 17 9l-4 0z" fill="#2f62a8"/></svg></button>
  <button class="app open excel" aria-label="Excel"><svg width="22" height="20"><path d="M6 1h15v18H6z" fill="#21a366"/><path d="M13 1h8v6h-8z" fill="#33c481"/><path d="M6 7h7v6H6z" fill="#107c41"/><path d="M6 13h15v6H6z" fill="#185c37"/><rect y="5" width="11" height="11" rx="1" fill="#107c41"/><path d="M3 7.500 8 13.500M8 7.500 3 13.500" stroke="#fff" stroke-width="1.600"/></svg></button>
  <div class="tray">
    <button class="weather"><svg width="22" height="18"><circle cx="15" cy="6" r="6" fill="#f5a02c"/><path d="M5 17.500a4.500 4.500 0 0 1 0-9A6 6 0 0 1 15.500 8a4.800 4.800 0 0 1 1.500 9.500z" fill="#b9d2f5"/><path d="M2 15q9-3 19-1-1 3.500-4 3.500H5q-2.500-.5-3-2.500z" fill="#dbe7fb"/></svg>2°C&ensp;くもりのち晴れ</button>
    <button aria-label="隠れているアイコン"><svg width="11" height="7" fill="none" stroke="#fff" stroke-width="1.200"><path d="M.5 6 5.500 1l5 5"/></svg></button>
    <button aria-label="会議"><svg width="12" height="14" fill="none" stroke="#fff"><path d="M1 4.500h7v5H1zM8 6.500l2.500-1.500v4L8 7.500M2 2.500q3.500-3 7 0M2 11.500q3.500 3 7 0"/></svg></button>
    <button aria-label="OneDrive"><svg width="15" height="12"><path d="M3 9a3 3 0 0 1 0-6A4.500 4.500 0 0 1 11 3a3 3 0 0 1 1 6z" fill="#1f8fe8"/><circle cx="10.500" cy="8" r="4" fill="#e8f2fb"/><path d="M8.500 8a2 2 0 0 1 4-.5M12.500 8.500a2 2 0 0 1-4 0" fill="none" stroke="#1566b0"/></svg></button>
    <button aria-label="バッテリー"><svg width="14" height="11" fill="none" stroke="#fff"><path d="M3.500 3.500h9v6h-9zM13.500 5v3M1 1v2h3V1M2.500 3v3"/><path d="M5 5h6v3H5z" fill="#fff"/></svg></button>
    <button aria-label="Wi-Fi"><svg width="12" height="11" fill="none" stroke="#fff"><path d="M1 10.500A9.500 9.500 0 0 1 11 1M4 10.500A7 7 0 0 1 11 4M7 10.500A4 4 0 0 1 11 7"/><circle cx="10.500" cy="10" r=".8" fill="#fff"/></svg></button>
    <button aria-label="音量"><svg width="15" height="12" fill="none" stroke="#fff"><path d="M1 4.500h2L6 1.500v9L3 7.500H1zM8 4q1.500 2 0 4M10 2.500q2.500 3.500 0 7M12 1q3.500 5 0 10"/></svg></button>
    <button class="ime">A</button>
    <div class="clock">10:51<br>2023/03/02</div>
    <button class="notice" aria-label="通知"><svg width="16" height="15" fill="none" stroke="#fff" stroke-width="1.200"><path d="M1 1h14v10.500h-4.500L8 14v-2.500H1z"/></svg></button>
  </div>
</footer>

</body>
</html>
```
FILE: styles.css
```css
* {
  box-sizing: border-box;
}
body {
  margin: 0;
  height: 100vh;
  display: flex;
  flex-direction: column;
  overflow: hidden;
  font-family: "Noto Sans", "Noto Sans CJK JP", sans-serif;
  font-feature-settings: "palt";
  font-size: 11px;
  line-height: 14px;
  color: #444;
  background: #f3f2f1;
}
button, input, select {
  font: inherit;
  font-feature-settings: inherit;
  color: inherit;
  border: 0;
  padding: 0;
  margin: 0;
  background: none;
}
button {
  display: flex;
  align-items: center;
  justify-content: center;
  white-space: nowrap;
}
a {
  color: inherit;
  text-decoration: none;
}
svg {
  flex: none;
}
.defs {
  position: absolute;
  width: 0;
  height: 0;
}
.chev {
  width: 8px;
  height: 8px;
}
.lettered {
  overflow: visible;
  font-family: "Liberation Sans", sans-serif;
  fill: #444;
}
.sort-a {
  fill: #2b88d8;
}

/* title bar */
.titlebar {
  position: relative;
  display: flex;
  align-items: center;
  height: 30px;
  flex: none;
  background: #217346;
  color: #fff;
}
.titlebar-art {
  position: absolute;
  right: 0;
  top: 0;
}
.quick {
  display: flex;
  align-items: center;
  gap: 12px;
  width: 218px;
  padding-left: 18px;
}
.quick button {
  gap: 2px;
}
.quick .dim {
  color: #4f9a6e;
}
.doc-title {
  width: 235px;
  margin: 0;
  font-size: 11px;
  font-weight: normal;
}
.find {
  display: flex;
  align-items: center;
  gap: 10px;
  width: 329px;
  height: 22px;
  padding-left: 18px;
  background: #a0cdb3;
  color: #185c37;
}
.find input {
  flex: 1;
  min-width: 0;
}
input::placeholder {
  color: inherit;
  opacity: 1;
}
.account {
  position: relative;
  display: flex;
  align-items: center;
  gap: 10px;
  margin-left: auto;
}
.avatar {
  width: 21px;
  height: 21px;
  border-radius: 50%;
  background: #0078d4;
  font-size: 10px;
  line-height: 21px;
  text-align: center;
}
.window-buttons {
  position: relative;
  display: flex;
  padding-left: 11px;
}
.window-buttons button {
  width: 41px;
  height: 30px;
}

/* ribbon tabs */
.menu {
  display: flex;
  align-items: center;
  gap: 23px;
  height: 30px;
  flex: none;
  padding: 0 12px;
}
.menu a {
  padding: 7px 0 3px;
  border-bottom: 2px solid transparent;
}
.menu .active {
  border-color: #217346;
  font-weight: bold;
}
.share {
  gap: 4px;
  width: 64px;
  height: 21px;
  margin-left: auto;
  background: #fff;
  border: 1px solid #e1dfdd;
  color: #217346;
  font-weight: bold;
}
.share .chev {
  margin-left: 6px;
}

/* ribbon */
.ribbon {
  display: grid;
  grid-template-columns: 90px 248px 278px 139px 168px 127px 140px 1fr;
  height: 86px;
  flex: none;
  border-bottom: 1px solid #a6a6a6;
}
.group {
  display: flex;
  flex-direction: column;
  height: 83px;
  border-right: 1px solid #c8c6c4;
}
.group-body {
  display: flex;
  flex: 1;
}
.group-name {
  position: relative;
  height: 14px;
  font-size: 10px;
  text-align: center;
}
.launcher {
  position: absolute;
  right: 2px;
  top: 3px;
  width: 10px;
  height: 10px;
}
.rows {
  display: flex;
  flex-direction: column;
  gap: 7px;
}
.group-body.rows {
  padding: 7px 0 0 7px;
}
.row {
  display: flex;
  align-items: center;
  height: 21px;
}
.tool {
  width: 21px;
  height: 21px;
  font-size: 12px;
}
.drop {
  width: 12px;
  height: 21px;
}
.sep {
  width: 1px;
  height: 18px;
  margin: 0 4px;
  background: #d2d0ce;
}
.sep.tall {
  height: 50px;
  margin: 0 3px;
}
select {
  appearance: none;
  height: 21px;
  padding: 0 3px;
  border: 1px solid #c8c6c4;
  background: #fff url("data:image/svg+xml,<svg xmlns='http://www.w3.org/2000/svg' width='8' height='8'><path d='M1.500 2.800 4 5.200 6.500 2.800' fill='none' stroke='%23333'/></svg>") no-repeat right 1px center;
}
.font-name {
  width: 154px;
  margin-right: 2px;
}
.font-size {
  width: 36px;
}
.number-format {
  width: 125px;
}
.letter {
  align-items: flex-start;
  width: 24px;
  font-size: 15px;
}
.letter.small {
  font-size: 13px;
}
.font-color {
  height: 15px;
  width: 14px;
  margin: 0 3px;
  border-bottom: 3px solid #f00;
}
.ruby {
  font-size: 7px;
  line-height: 8px;
}
.percent {
  width: 26px;
  font-size: 15px;
}
.comma {
  width: 18px;
}
.align {
  gap: 1px;
  padding: 7px 0 0 7px;
}
.align-grid {
  display: grid;
  grid-template-columns: repeat(3, 21px);
  grid-auto-rows: 21px;
  gap: 7px 0;
}
.pressed {
  background: #c8c6c4;
  border: 1px solid #979593;
}
.indent {
  width: 42px;
}
.wide {
  gap: 3px;
  font-size: 10px;
}
.wrap .drop {
  margin-left: auto;
}
.wrap {
  width: 138px;
}
.big {
  flex-direction: column;
  justify-content: flex-start;
  gap: 3px;
  font-size: 10px;
}
.big span .chev {
  margin-left: 3px;
}
.clipboard {
  padding: 4px 0 0 8px;
}
.clipboard .big {
  width: 40px;
}
.stack {
  display: flex;
  flex-direction: column;
  gap: 5px;
}
.stack button {
  gap: 4px;
  height: 16px;
  justify-content: flex-start;
}
.clipboard .stack {
  padding-left: 4px;
}
.styles, .cells {
  padding-top: 4px;
}
.styles {
  display: grid;
  grid-template-columns: 55px 56px 51px;
}
.cells {
  padding-left: 7px;
}
.cells .big {
  width: 38px;
}
.editing {
  padding: 4px 0 0 10px;
}
.editing .stack {
  width: 32px;
  padding-top: 1px;
}
.editing .big {
  width: 48px;
}
.collapse {
  align-self: end;
  justify-self: end;
  margin: 0 7px 3px 0;
}

/* worksheet */
.workspace {
  display: flex;
  flex: 1;
  min-height: 0;
  background: #e6e6e6;
}
.sheet {
  position: relative;
  flex: 1;
  min-width: 0;
  overflow: hidden;
  padding-top: 159px;
  background: #fff;
  border: solid #ababab;
  border-width: 0 1px 1px 0;
}
.pivot {
  width: 160px;
  margin-bottom: 15px;
  table-layout: fixed;
  border-collapse: collapse;
  font-family: "Liberation Sans", "Noto Sans CJK JP", sans-serif;
  font-feature-settings: normal;
  font-size: 13px;
  color: #000;
  background: #dce6f1;
}
.pivot th, .pivot td {
  position: relative;
  height: 16px;
  padding: 0 2px;
  line-height: 16px;
  font-weight: normal;
  text-align: left;
  white-space: nowrap;
}
.pivot th:first-child {
  width: 78px;
  border-right: 1px solid #c5d3e4;
}
.pivot button {
  position: absolute;
  right: 1px;
  top: 1px;
  width: 14px;
  height: 14px;
  background: #fff;
  border: 1px solid #bbb;
}
.filters {
  border: solid #444;
  border-width: 1px 0;
}
.totals tbody td, .totals tfoot td {
  padding-right: 7px;
  text-align: right;
}
.totals thead, .totals tfoot {
  background: #000;
  color: #fff;
}

/* timeline slicer */
.timeline {
  position: absolute;
  left: 0;
  top: 0;
  width: 318px;
  height: 145px;
  padding: 0 6px 0 7px;
  border: 1px solid #c0504d;
  border-top: 0;
  background: #fff;
  color: #888;
}
.timeline-head {
  display: flex;
  justify-content: space-between;
  align-items: center;
  height: 29px;
  padding: 0 1px 3px;
  border-bottom: 1px solid #c0504d;
  font-size: 13px;
  font-weight: bold;
  color: #111;
}
.timeline-range {
  display: flex;
  justify-content: space-between;
  height: 27px;
  padding: 0 4px 0 1px;
  font-feature-settings: normal;
  line-height: 27px;
}
.timeline-range span {
  color: #a8403e;
}
.timeline-range button {
  gap: 7px;
}
.timeline-year {
  padding: 6px 7px 9px;
}
.months {
  display: flex;
  margin: 0 5px;
  padding-bottom: 5px;
}
.months span {
  flex: 1;
  padding-left: 1px;
}
.period {
  display: flex;
  gap: 1px;
  height: 15px;
  margin-right: 6px;
}
.period i {
  flex: 1;
  background: linear-gradient(#c95452, #a8403f 60%, #702a2a);
}
.period i:first-child {
  flex: 0 0 5px;
}
.timeline-scroll {
  display: flex;
  align-items: center;
  gap: 1px;
  height: 14px;
  margin-top: 7px;
}
.timeline-scroll button {
  width: 14px;
  height: 14px;
  border: 1px solid #bbb;
}
.track {
  width: 34px;
  height: 6px;
  background: #f2d9d8;
}
.timeline-scroll .thumb {
  flex: 1;
  height: 14px;
  border: 1px solid #bbb;
}

/* charts */
.pie {
  position: absolute;
  left: 330px;
  top: 0;
}
.pie-text {
  font-size: 12px;
  font-weight: bold;
  text-anchor: middle;
  fill: #3f73b8;
}
.pie-text .pie-title {
  font-size: 19px;
  text-anchor: start;
  fill: #595959;
}
.pie-text .pct {
  font-family: Lato, sans-serif;
  font-size: 11px;
}
.bar-chart {
  position: absolute;
  left: 220px;
  top: 298px;
  display: flex;
  width: 480px;
}
.bar-names {
  display: flex;
  flex-direction: column;
  width: 71px;
  padding-right: 10px;
  text-align: right;
}
.bar-names span, .bar-row {
  height: 36px;
  line-height: 36px;
  white-space: nowrap;
}
.bar-plot {
  flex: 1;
  border-right: 1px solid #d9d9d9;
  background: repeating-linear-gradient(90deg, #d9d9d9 0 1px, transparent 1px 20%);
}
.bar-row {
  display: flex;
  align-items: center;
  gap: 7px;
  font-size: 10px;
}
.bar {
  height: 19px;
  flex: none;
  border: solid;
  border-width: 3px 2px 2px 3px;
  border-color: #6fb2f5 #1c4a86 #2a5c9c #3f7dc6;
  background: linear-gradient(#5b9fe8, #3a78c4 40%, #38699f);
  box-shadow: 0 2px 2px #bbb;
}
.tooltip {
  position: absolute;
  left: 68px;
  top: 129px;
  width: 71px;
  height: 19px;
  border: 1px solid #777;
  background: #fff;
  box-shadow: 2px 2px 1px #999;
  line-height: 17px;
  text-align: center;
}

/* scroll bars */
.vscroll {
  display: flex;
  flex-direction: column;
  width: 20px;
  padding: 1px 2px 0 4px;
}
.vscroll button {
  height: 13px;
  background: #fff;
  border: 1px solid #ababab;
}
.vscroll .thumb {
  flex: 1;
  margin-bottom: 16px;
  background: #fff;
  border: 1px solid #ababab;
  border-top: 0;
}
.sheet-tabs {
  display: flex;
  align-items: center;
  gap: 4px;
  height: 25px;
  flex: none;
  padding-right: 19px;
  background: #e6e6e6;
  border-bottom: 1px solid #d0d0d0;
  font-size: 12px;
  color: #000;
}
.tab-arrows {
  display: flex;
  gap: 22px;
  width: 88px;
  padding-left: 24px;
}
.tab {
  width: 52px;
  height: 20px;
  line-height: 19px;
  text-align: center;
  font-weight: 500;
  outline: 1px solid #bbb;
}
.tab.green {
  width: 46px;
  background: #cfc;
}
.tab.yellow {
  width: 64px;
  background: #ff9;
}
.tab.blue {
  background: #366092;
  color: #fff;
}
.tab.current {
  width: 69px;
  background: linear-gradient(#fff, #f3cccb);
  border-bottom: 2px solid #217346;
  font-size: 11px;
  color: #217346;
}
.tab.olive {
  background: #9bbb59;
}
.tab.red {
  background: #f00;
  color: #fff;
}
.add {
  margin-left: 26px;
}
.dots {
  margin-left: auto;
  padding-right: 8px;
  color: #888;
}
.hscroll {
  display: flex;
  width: 454px;
  height: 13px;
  background: #f0f0f0;
}
.hscroll button {
  width: 13px;
  background: #fff;
  border: 1px solid #ababab;
}
.hscroll .thumb {
  flex: 1;
  margin-right: 32px;
  background: #fff;
  border: 1px solid #ababab;
}

/* status bar */
.status {
  display: flex;
  align-items: center;
  gap: 16px;
  height: 19px;
  flex: none;
  padding: 0 8px 0 6px;
}
.access {
  display: flex;
  align-items: center;
  gap: 3px;
  font-size: 10px;
}
.views {
  display: flex;
  margin-left: auto;
}
.views button {
  width: 36px;
  height: 19px;
}
.views .on {
  background: #cfcdcb;
}
.status .step {
  margin-left: -12px;
}
.status .views + .step {
  margin-left: -8px;
}
.zoom {
  appearance: none;
  width: 89px;
  height: 12px;
  margin-left: -12px;
  background: linear-gradient(#777, #777) center / 100% 1px no-repeat;
}
.zoom::-webkit-slider-thumb {
  appearance: none;
  width: 4px;
  height: 10px;
  background: #333;
}
.zoom-value {
  margin-left: -5px;
}

/* taskbar */
.taskbar {
  display: flex;
  height: 36px;
  flex: none;
  background: #24323a;
  color: #fff;
}
.start {
  width: 43px;
}
.task-search {
  display: flex;
  align-items: center;
  gap: 10px;
  width: 257px;
  padding-left: 10px;
  background: #f3f3f3;
  color: #333;
  font-size: 12px;
}
.task-search input {
  flex: 1;
  min-width: 0;
}
.app {
  width: 44px;
  border-bottom: 2px solid transparent;
}
.open {
  border-color: #76b9ed;
}
.excel {
  background: #55616a;
}
.tray {
  display: flex;
  align-items: center;
  margin-left: auto;
}
.tray button {
  width: 22px;
  height: 36px;
}
.tray .weather {
  width: auto;
  gap: 6px;
  margin-right: 7px;
  font-size: 12px;
}
.tray .ime {
  width: 24px;
  font-size: 17px;
}
.clock {
  width: 54px;
  font-size: 10px;
  line-height: 16px;
  text-align: center;
}
.tray .notice {
  width: 49px;
  margin-right: 3px;
  border-right: 1px solid #5b666c;
}
```
